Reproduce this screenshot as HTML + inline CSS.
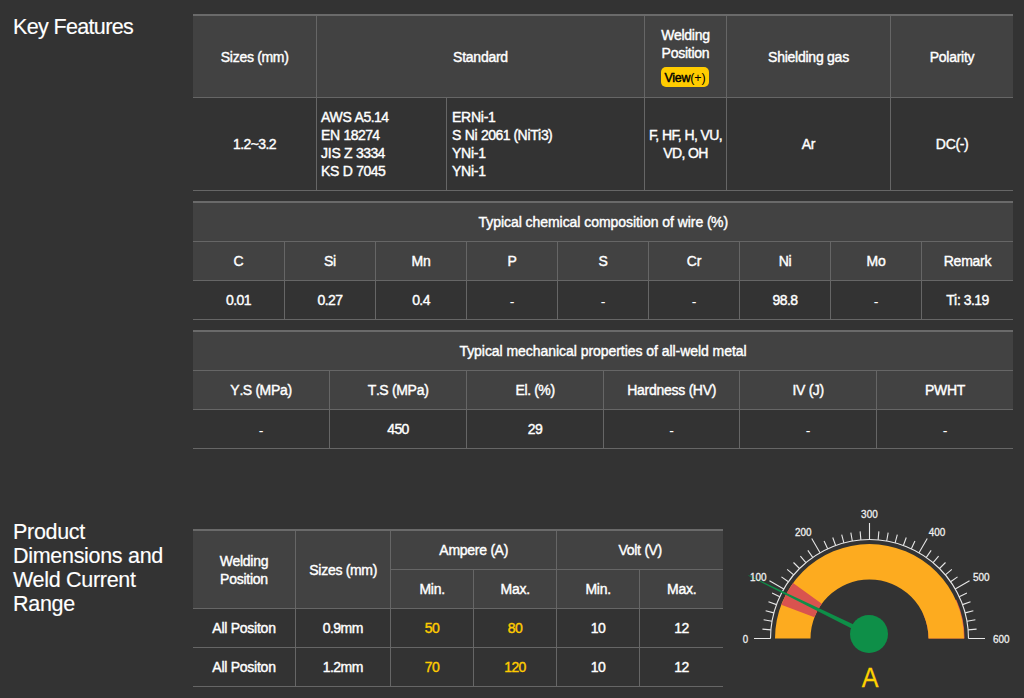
<!DOCTYPE html>
<html><head><meta charset="utf-8">
<style>
html,body{margin:0;padding:0;}
body{width:1024px;height:698px;overflow:hidden;background:#333333;position:relative;font-family:"Liberation Sans",sans-serif;color:#fff;}
.abs{position:absolute;}
.h{position:absolute;background:#424242;}
.tb{position:absolute;background:#6a6a6a;height:2px;}
.hl{position:absolute;background:#666666;height:1px;}
.vl{position:absolute;background:#666666;width:1px;}
.c{position:absolute;display:flex;align-items:center;justify-content:center;text-align:center;font-size:14px;font-weight:normal;-webkit-text-stroke:0.4px #fff;letter-spacing:-0.25px;line-height:18px;white-space:nowrap;}
.c.y{color:#ffcc00;-webkit-text-stroke:0.4px #ffcc00;}
.d{letter-spacing:-0.6px;}
.dash{position:relative;top:2px;-webkit-text-stroke:0;}
.title{position:absolute;left:13px;font-size:21.5px;line-height:24px;color:#fff;-webkit-text-stroke:0.15px #fff;}
.btn{position:absolute;left:661px;top:67px;width:48px;height:20px;border-radius:5px;background:#ffcc00;color:#000;font-size:12.5px;line-height:23px;text-align:center;letter-spacing:-0.3px;-webkit-text-stroke:0.45px #000;}
</style></head>
<body>
<div class="title" style="top:15px;letter-spacing:-0.65px;">Key Features</div>
<div class="h" style="left:193px;top:16px;width:820px;height:81px;"></div>
<div class="tb" style="left:193px;top:14px;width:820px;"></div>
<div class="hl" style="left:193px;top:97px;width:820px;"></div>
<div class="hl" style="left:193px;top:190px;width:820px;"></div>
<div class="vl" style="left:316px;top:16px;height:174px;"></div>
<div class="vl" style="left:644px;top:16px;height:174px;"></div>
<div class="vl" style="left:726px;top:16px;height:174px;"></div>
<div class="vl" style="left:890px;top:16px;height:174px;"></div>
<div class="vl" style="left:446px;top:98px;height:92px;"></div>
<div class="c" style="left:193px;top:16px;width:123px;height:81px;"><div>Sizes <span class="d">(</span>mm<span class="d">)</span></div></div>
<div class="c" style="left:317px;top:16px;width:327px;height:81px;"><div>Standard</div></div>
<div class="c" style="left:645px;top:26px;width:81px;height:36px;align-items:flex-start;"><div>Welding<br>Position</div></div>
<div class="btn">View<span style="-webkit-text-stroke:0;letter-spacing:-0.1px">(+)</span></div>
<div class="c" style="left:727px;top:16px;width:163px;height:81px;"><div>Shielding gas</div></div>
<div class="c" style="left:891px;top:16px;width:122px;height:81px;"><div>Polarity</div></div>
<div class="c" style="left:193px;top:98px;width:123px;height:92px;"><div><span class="d">1.2~3.2</span></div></div>
<div class="c" style="left:321px;top:98px;width:120px;height:92px;justify-content:flex-start;text-align:left;"><div>AWS A<span class="d">5.14</span><br>EN <span class="d">18274</span><br>JIS Z <span class="d">3334</span><br>KS D <span class="d">7045</span></div></div>
<div class="c" style="left:452px;top:98px;width:190px;height:92px;justify-content:flex-start;text-align:left;"><div>ERNi-<span class="d">1</span><br>S Ni <span class="d">2061</span> <span class="d">(</span>NiTi<span class="d">3)</span><br>YNi-<span class="d">1</span><br>YNi-<span class="d">1</span></div></div>
<div class="c" style="left:645px;top:98px;width:81px;height:92px;letter-spacing:-0.6px;"><div>F<span class="d">,</span> HF<span class="d">,</span> H<span class="d">,</span> VU<span class="d">,</span><br>VD<span class="d">,</span> OH</div></div>
<div class="c" style="left:727px;top:98px;width:163px;height:92px;"><div>Ar</div></div>
<div class="c" style="left:891px;top:98px;width:122px;height:92px;"><div>DC<span class="d">(</span>-<span class="d">)</span></div></div>
<div class="h" style="left:193px;top:203px;width:820px;height:77px;"></div>
<div class="tb" style="left:193px;top:201px;width:820px;"></div>
<div class="hl" style="left:193px;top:241px;width:820px;"></div>
<div class="hl" style="left:193px;top:280px;width:820px;"></div>
<div class="hl" style="left:193px;top:319px;width:820px;"></div>
<div class="c" style="left:193px;top:203px;width:820px;height:38px;letter-spacing:-0.05px;"><div>Typical chemical composition of wire <span class="d">(</span>%<span class="d">)</span></div></div>
<div class="vl" style="left:284px;top:242px;height:77px;"></div>
<div class="vl" style="left:375px;top:242px;height:77px;"></div>
<div class="vl" style="left:466px;top:242px;height:77px;"></div>
<div class="vl" style="left:557px;top:242px;height:77px;"></div>
<div class="vl" style="left:648px;top:242px;height:77px;"></div>
<div class="vl" style="left:739px;top:242px;height:77px;"></div>
<div class="vl" style="left:830px;top:242px;height:77px;"></div>
<div class="vl" style="left:921px;top:242px;height:77px;"></div>
<div class="c" style="left:193px;top:242px;width:91px;height:38px;"><div>C</div></div>
<div class="c" style="left:193px;top:281px;width:91px;height:38px;"><div><span class="d">0.01</span></div></div>
<div class="c" style="left:285px;top:242px;width:90px;height:38px;"><div>Si</div></div>
<div class="c" style="left:285px;top:281px;width:90px;height:38px;"><div><span class="d">0.27</span></div></div>
<div class="c" style="left:376px;top:242px;width:90px;height:38px;"><div>Mn</div></div>
<div class="c" style="left:376px;top:281px;width:90px;height:38px;"><div><span class="d">0.4</span></div></div>
<div class="c" style="left:467px;top:242px;width:90px;height:38px;"><div>P</div></div>
<div class="c" style="left:467px;top:281px;width:90px;height:38px;"><div><span class="dash">-</span></div></div>
<div class="c" style="left:558px;top:242px;width:90px;height:38px;"><div>S</div></div>
<div class="c" style="left:558px;top:281px;width:90px;height:38px;"><div><span class="dash">-</span></div></div>
<div class="c" style="left:649px;top:242px;width:90px;height:38px;"><div>Cr</div></div>
<div class="c" style="left:649px;top:281px;width:90px;height:38px;"><div><span class="dash">-</span></div></div>
<div class="c" style="left:740px;top:242px;width:90px;height:38px;"><div>Ni</div></div>
<div class="c" style="left:740px;top:281px;width:90px;height:38px;"><div><span class="d">98.8</span></div></div>
<div class="c" style="left:831px;top:242px;width:90px;height:38px;"><div>Mo</div></div>
<div class="c" style="left:831px;top:281px;width:90px;height:38px;"><div><span class="dash">-</span></div></div>
<div class="c" style="left:922px;top:242px;width:91px;height:38px;"><div>Remark</div></div>
<div class="c" style="left:922px;top:281px;width:91px;height:38px;"><div>Ti<span class="d">:</span> <span class="d">3.19</span></div></div>
<div class="h" style="left:193px;top:332px;width:820px;height:77px;"></div>
<div class="tb" style="left:193px;top:330px;width:820px;"></div>
<div class="hl" style="left:193px;top:370px;width:820px;"></div>
<div class="hl" style="left:193px;top:409px;width:820px;"></div>
<div class="hl" style="left:193px;top:448px;width:820px;"></div>
<div class="c" style="left:193px;top:332px;width:820px;height:38px;letter-spacing:-0.05px;"><div>Typical mechanical properties of all-weld metal</div></div>
<div class="vl" style="left:329px;top:371px;height:77px;"></div>
<div class="vl" style="left:466px;top:371px;height:77px;"></div>
<div class="vl" style="left:603px;top:371px;height:77px;"></div>
<div class="vl" style="left:739px;top:371px;height:77px;"></div>
<div class="vl" style="left:876px;top:371px;height:77px;"></div>
<div class="c" style="left:193px;top:371px;width:136px;height:38px;"><div>Y<span class="d">.</span>S <span class="d">(</span>MPa<span class="d">)</span></div></div>
<div class="c" style="left:193px;top:410px;width:136px;height:38px;"><div><span class="dash">-</span></div></div>
<div class="c" style="left:330px;top:371px;width:136px;height:38px;"><div>T<span class="d">.</span>S <span class="d">(</span>MPa<span class="d">)</span></div></div>
<div class="c" style="left:330px;top:410px;width:136px;height:38px;"><div><span class="d">450</span></div></div>
<div class="c" style="left:467px;top:371px;width:136px;height:38px;"><div>El<span class="d">.</span> <span class="d">(</span>%<span class="d">)</span></div></div>
<div class="c" style="left:467px;top:410px;width:136px;height:38px;"><div><span class="d">29</span></div></div>
<div class="c" style="left:604px;top:371px;width:135px;height:38px;"><div>Hardness <span class="d">(</span>HV<span class="d">)</span></div></div>
<div class="c" style="left:604px;top:410px;width:135px;height:38px;"><div><span class="dash">-</span></div></div>
<div class="c" style="left:740px;top:371px;width:136px;height:38px;"><div>IV <span class="d">(</span>J<span class="d">)</span></div></div>
<div class="c" style="left:740px;top:410px;width:136px;height:38px;"><div><span class="dash">-</span></div></div>
<div class="c" style="left:877px;top:371px;width:136px;height:38px;"><div>PWHT</div></div>
<div class="c" style="left:877px;top:410px;width:136px;height:38px;"><div><span class="dash">-</span></div></div>
<div class="title" style="top:520px;letter-spacing:-0.3px;">Product<br>Dimensions and<br>Weld Current<br>Range</div>
<div class="h" style="left:193px;top:531px;width:530px;height:77px;"></div>
<div class="tb" style="left:193px;top:529px;width:530px;"></div>
<div class="hl" style="left:390px;top:569px;width:333px;"></div>
<div class="hl" style="left:193px;top:608px;width:530px;"></div>
<div class="hl" style="left:193px;top:647px;width:530px;"></div>
<div class="hl" style="left:193px;top:686px;width:530px;"></div>
<div class="vl" style="left:295px;top:531px;height:155px;"></div>
<div class="vl" style="left:390px;top:531px;height:155px;"></div>
<div class="vl" style="left:556px;top:531px;height:155px;"></div>
<div class="vl" style="left:473px;top:570px;height:116px;"></div>
<div class="vl" style="left:639px;top:570px;height:116px;"></div>
<div class="c" style="left:193px;top:531px;width:102px;height:77px;"><div>Welding<br>Position</div></div>
<div class="c" style="left:296px;top:531px;width:94px;height:77px;"><div>Sizes <span class="d">(</span>mm<span class="d">)</span></div></div>
<div class="c" style="left:391px;top:531px;width:165px;height:38px;"><div>Ampere <span class="d">(</span>A<span class="d">)</span></div></div>
<div class="c" style="left:557px;top:531px;width:166px;height:38px;"><div>Volt <span class="d">(</span>V<span class="d">)</span></div></div>
<div class="c" style="left:391px;top:570px;width:82px;height:38px;"><div>Min<span class="d">.</span></div></div>
<div class="c" style="left:474px;top:570px;width:82px;height:38px;"><div>Max<span class="d">.</span></div></div>
<div class="c" style="left:557px;top:570px;width:82px;height:38px;"><div>Min<span class="d">.</span></div></div>
<div class="c" style="left:640px;top:570px;width:83px;height:38px;"><div>Max<span class="d">.</span></div></div>
<div class="c" style="left:193px;top:609px;width:102px;height:38px;"><div>All Positon</div></div>
<div class="c" style="left:296px;top:609px;width:94px;height:38px;"><div><span class="d">0.9</span>mm</div></div>
<div class="c y" style="left:391px;top:609px;width:82px;height:38px;"><div><span class="d">50</span></div></div>
<div class="c y" style="left:474px;top:609px;width:82px;height:38px;"><div><span class="d">80</span></div></div>
<div class="c" style="left:557px;top:609px;width:82px;height:38px;"><div><span class="d">10</span></div></div>
<div class="c" style="left:640px;top:609px;width:83px;height:38px;"><div><span class="d">12</span></div></div>
<div class="c" style="left:193px;top:648px;width:102px;height:38px;"><div>All Positon</div></div>
<div class="c" style="left:296px;top:648px;width:94px;height:38px;"><div><span class="d">1.2</span>mm</div></div>
<div class="c y" style="left:391px;top:648px;width:82px;height:38px;"><div><span class="d">70</span></div></div>
<div class="c y" style="left:474px;top:648px;width:82px;height:38px;"><div><span class="d">120</span></div></div>
<div class="c" style="left:557px;top:648px;width:82px;height:38px;"><div><span class="d">10</span></div></div>
<div class="c" style="left:640px;top:648px;width:83px;height:38px;"><div><span class="d">12</span></div></div>
<svg class="abs" style="left:0;top:0" width="1024" height="698" viewBox="0 0 1024 698">
<path d="M956.38,599.82 A95.1,95.1 0 0 1 964.60,638.50 L928.50,638.50 A59,59 0 0 0 923.40,614.50 Z" fill="#d9534f"/>
<path d="M775.00,638.50 A94.5,94.5 0 0 1 964.00,638.50 L928.50,638.50 A59,59 0 0 0 810.50,638.50 Z" fill="#fdab1f"/>
<path d="M781.28,604.63 A94.5,94.5 0 0 1 793.05,582.95 L821.77,603.82 A59,59 0 0 0 814.42,617.36 Z" fill="#d9534f"/>
<path d="M770.50,638.50 A99,99 0 0 1 968.50,638.50" fill="none" stroke="#e6e6e6" stroke-width="1.1"/>
<path d="M770.50,638.50L754.00,638.50 M770.88,629.87L762.41,629.13 M772.00,621.31L763.63,619.83 M773.87,612.88L765.66,610.68 M776.47,604.64L768.48,601.73 M779.78,596.66L772.07,593.07 M783.76,589.00L769.47,580.75 M788.40,581.72L781.44,576.84 M793.66,574.86L787.15,569.40 M799.50,568.50L793.49,562.49 M805.86,562.66L800.40,556.15 M812.72,557.40L807.84,550.44 M820.00,552.76L811.75,538.47 M827.66,548.78L824.07,541.07 M835.64,545.47L832.73,537.48 M843.88,542.87L841.68,534.66 M852.31,541.00L850.83,532.63 M860.87,539.88L860.13,531.41 M869.50,539.50L869.50,523.00 M878.13,539.88L878.87,531.41 M886.69,541.00L888.17,532.63 M895.12,542.87L897.32,534.66 M903.36,545.47L906.27,537.48 M911.34,548.78L914.93,541.07 M919.00,552.76L927.25,538.47 M926.28,557.40L931.16,550.44 M933.14,562.66L938.60,556.15 M939.50,568.50L945.51,562.49 M945.34,574.86L951.85,569.40 M950.60,581.72L957.56,576.84 M955.24,589.00L969.53,580.75 M959.22,596.66L966.93,593.07 M962.53,604.64L970.52,601.73 M965.13,612.88L973.34,610.68 M967.00,621.31L975.37,619.83 M968.12,629.87L976.59,629.13 M968.50,638.50L985.00,638.50" stroke="#e6e6e6" stroke-width="1.1" fill="none"/>
<path d="M870.14,632.16 L748.65,575.19 L748.35,575.81 L867.86,636.84 Z" fill="#0e8f48"/>
<circle cx="869" cy="634" r="19" fill="#0e8f48"/>
<text x="742.70" y="642.90" textLength="5.4" lengthAdjust="spacingAndGlyphs" font-family="Liberation Sans" font-size="11" stroke="#f0f0f0" stroke-width="0.3" fill="#f0f0f0">0</text>
<text x="750.00" y="580.90" textLength="16.6" lengthAdjust="spacingAndGlyphs" font-family="Liberation Sans" font-size="11" stroke="#f0f0f0" stroke-width="0.3" fill="#f0f0f0">100</text>
<text x="795.00" y="535.90" textLength="16.6" lengthAdjust="spacingAndGlyphs" font-family="Liberation Sans" font-size="11" stroke="#f0f0f0" stroke-width="0.3" fill="#f0f0f0">200</text>
<text x="861.10" y="518.20" textLength="16.6" lengthAdjust="spacingAndGlyphs" font-family="Liberation Sans" font-size="11" stroke="#f0f0f0" stroke-width="0.3" fill="#f0f0f0">300</text>
<text x="928.80" y="536.20" textLength="16.6" lengthAdjust="spacingAndGlyphs" font-family="Liberation Sans" font-size="11" stroke="#f0f0f0" stroke-width="0.3" fill="#f0f0f0">400</text>
<text x="972.90" y="581.15" textLength="16.6" lengthAdjust="spacingAndGlyphs" font-family="Liberation Sans" font-size="11" stroke="#f0f0f0" stroke-width="0.3" fill="#f0f0f0">500</text>
<text x="993.05" y="642.90" textLength="16.6" lengthAdjust="spacingAndGlyphs" font-family="Liberation Sans" font-size="11" stroke="#f0f0f0" stroke-width="0.3" fill="#f0f0f0">600</text>
<text transform="translate(870.2,686.6) scale(0.88,1)" text-anchor="middle" font-family="Liberation Sans" font-size="28.5" stroke="#ffd200" stroke-width="0.3" fill="#ffd200">A</text>
</svg>
</body></html>
